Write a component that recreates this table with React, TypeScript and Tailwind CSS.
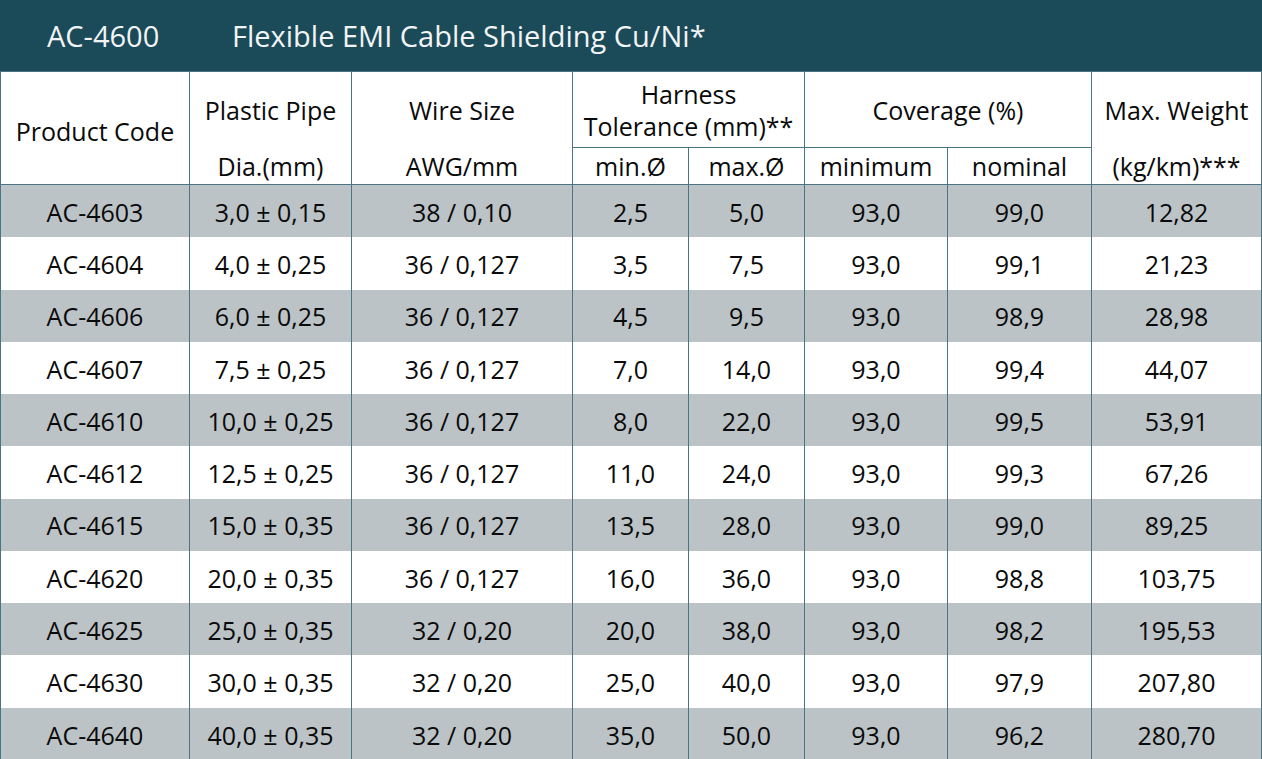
const ROWS = [
  ['AC-4603', '3,0 ± 0,15', '38 / 0,10', '2,5', '5,0', '93,0', '99,0', '12,82'],
  ['AC-4604', '4,0 ± 0,25', '36 / 0,127', '3,5', '7,5', '93,0', '99,1', '21,23'],
  ['AC-4606', '6,0 ± 0,25', '36 / 0,127', '4,5', '9,5', '93,0', '98,9', '28,98'],
  ['AC-4607', '7,5 ± 0,25', '36 / 0,127', '7,0', '14,0', '93,0', '99,4', '44,07'],
  ['AC-4610', '10,0 ± 0,25', '36 / 0,127', '8,0', '22,0', '93,0', '99,5', '53,91'],
  ['AC-4612', '12,5 ± 0,25', '36 / 0,127', '11,0', '24,0', '93,0', '99,3', '67,26'],
  ['AC-4615', '15,0 ± 0,35', '36 / 0,127', '13,5', '28,0', '93,0', '99,0', '89,25'],
  ['AC-4620', '20,0 ± 0,35', '36 / 0,127', '16,0', '36,0', '93,0', '98,8', '103,75'],
  ['AC-4625', '25,0 ± 0,35', '32 / 0,20', '20,0', '38,0', '93,0', '98,2', '195,53'],
  ['AC-4630', '30,0 ± 0,35', '32 / 0,20', '25,0', '40,0', '93,0', '97,9', '207,80'],
  ['AC-4640', '40,0 ± 0,35', '32 / 0,20', '35,0', '50,0', '93,0', '96,2', '280,70'],
];

const COLS = 'grid grid-cols-[189px_162px_221px_116px_116px_143px_144px_170px]';
const CELL = 'flex items-center justify-center border-l border-[#4a7483]';

export default function App() {
  return (
    <div className="h-[759px] w-[1262px] overflow-hidden bg-white font-['Open_Sans',sans-serif] text-[#0a0a0a]">
      <div className="flex h-[71px] items-center bg-[#1b4a59] text-[29px] text-[#f2f4f5]">
        <span className="w-[232px] pl-[47px]">AC-4600</span>
        <span>Flexible EMI Cable Shielding Cu/Ni*</span>
      </div>

      <div className={`${COLS} grid-rows-[75px_37px] border-r border-t border-[#4a7483] text-[25px] font-medium leading-[32px]`}>
        <div className={`${CELL} row-span-2 pt-[6px]`}>Product Code</div>
        <div className={CELL}>Plastic Pipe</div>
        <div className={CELL}>Wire Size</div>
        <div className={`${CELL} col-span-2 flex-col pt-[1px]`}>
          <span>Harness</span>
          <span>Tolerance (mm)**</span>
        </div>
        <div className={`${CELL} col-span-2`}>Coverage (%)</div>
        <div className={CELL}>Max. Weight</div>
        <div className={CELL}>Dia.(mm)</div>
        <div className={CELL}>AWG/mm</div>
        <div className={`${CELL} border-t`}>min.Ø</div>
        <div className={`${CELL} border-t`}>max.Ø</div>
        <div className={`${CELL} border-t`}>minimum</div>
        <div className={`${CELL} border-t`}>nominal</div>
        <div className={CELL}>(kg/km)***</div>
      </div>

      <div className="flex h-[576px] flex-col border-r border-t border-[#4a7483] text-[25px] font-medium">
        {ROWS.map((row, i) => (
          <div key={row[0]} className={`${COLS} flex-1 ${i % 2 === 0 ? 'bg-[#bcc3c6]' : 'bg-white'}`}>
            {row.map((value, j) => (
              <div key={j} className={`${CELL} pt-[3px]`}>
                {value}
              </div>
            ))}
          </div>
        ))}
      </div>
    </div>
  );
}
